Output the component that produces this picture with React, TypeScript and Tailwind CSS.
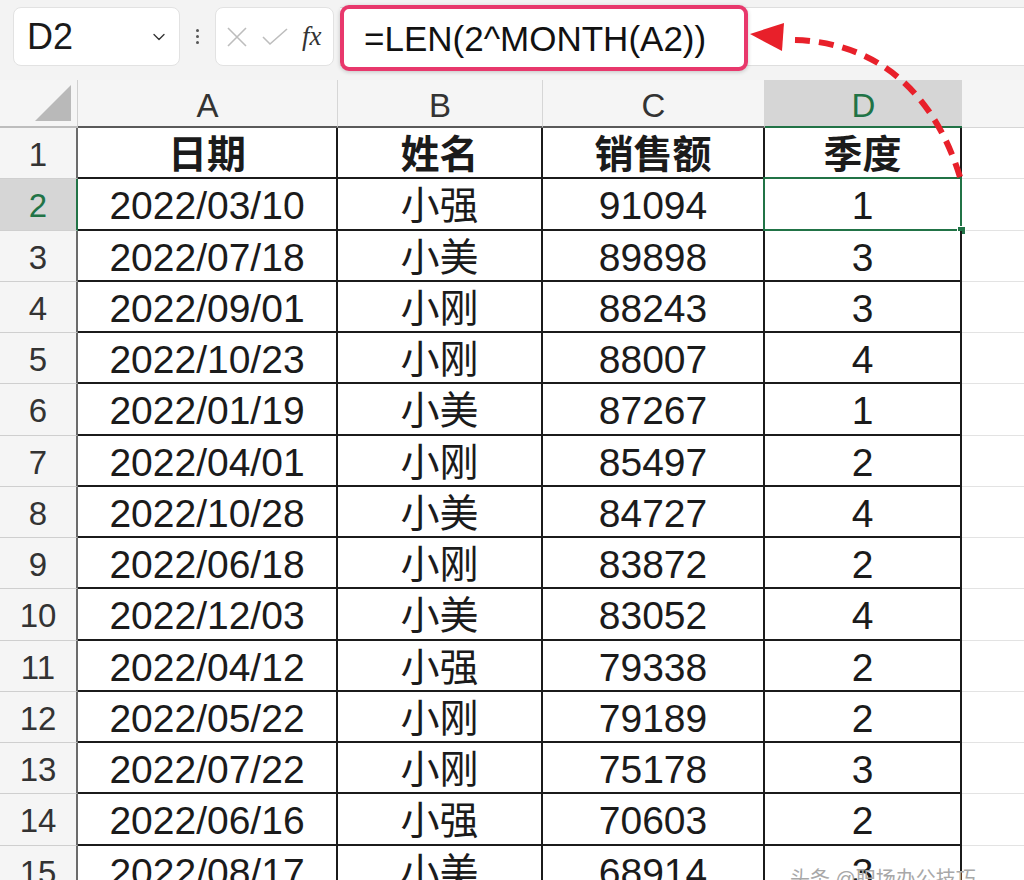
import * as React from "react";
import { ChevronDown } from "lucide-react";

const rows: [string, string, string, string][] = [
  ["2022/03/10", "小强", "91094", "1"],
  ["2022/07/18", "小美", "89898", "3"],
  ["2022/09/01", "小刚", "88243", "3"],
  ["2022/10/23", "小刚", "88007", "4"],
  ["2022/01/19", "小美", "87267", "1"],
  ["2022/04/01", "小刚", "85497", "2"],
  ["2022/10/28", "小美", "84727", "4"],
  ["2022/06/18", "小刚", "83872", "2"],
  ["2022/12/03", "小美", "83052", "4"],
  ["2022/04/12", "小强", "79338", "2"],
  ["2022/05/22", "小刚", "79189", "2"],
  ["2022/07/22", "小刚", "75178", "3"],
  ["2022/06/16", "小强", "70603", "2"],
  ["2022/08/17", "小美", "68914", "3"],
];

const font = { fontFamily: '"Liberation Sans", "Noto Sans CJK SC", sans-serif' };

const FormulaBar: React.FC = () => (
  <div className="flex h-[80px] items-start bg-[#f3f3f3] pt-[7px]">
    <div className="ml-[13px] flex h-[59px] w-[167px] items-center justify-between rounded-lg border border-[#e2e2e2] bg-white pl-[13px] pr-[10px]">
      <span className="text-[36px] leading-none text-[#1a1a1a]">D2</span>
      <ChevronDown size={20} strokeWidth={1.6} className="text-[#333]" />
    </div>
    <div className="flex h-[59px] w-[35px] flex-col items-center justify-center gap-[3px]">
      <span className="h-[3px] w-[3px] rounded-full bg-[#555]" />
      <span className="h-[3px] w-[3px] rounded-full bg-[#555]" />
      <span className="h-[3px] w-[3px] rounded-full bg-[#555]" />
    </div>
    <div className="flex h-[59px] w-[119px] items-center gap-[14px] rounded-lg border border-[#e2e2e2] bg-white pl-[10px]">
      <svg width="22" height="22" viewBox="0 0 22 22" className="text-[#bdbdbd]">
        <path d="M2 2 L20 20 M20 2 L2 20" stroke="currentColor" strokeWidth="1.6" fill="none" />
      </svg>
      <svg width="26" height="20" viewBox="0 0 26 20" className="text-[#bdbdbd]">
        <path d="M1 10 L8 17 L25 2" stroke="currentColor" strokeWidth="1.6" fill="none" />
      </svg>
      <span className="text-[27px] italic leading-none text-[#333]" style={{ fontFamily: '"Liberation Serif", serif' }}>
        fx
      </span>
    </div>
    <div className="relative ml-[6px] h-[59px] flex-1 border-y border-[#dedede] bg-white">
      <div className="absolute left-0 top-[-3px] flex h-[66px] w-[408px] items-center rounded-[9px] border-[4px] border-[#e8386c] bg-white pl-[20px] shadow-[0_1px_4px_rgba(0,0,0,0.2)]">
        <span className="text-[35px] leading-none text-[#111]">=LEN(2^MONTH(A2))</span>
      </div>
    </div>
  </div>
);

const Sheet: React.FC = () => {
  const cell = "flex items-center justify-center border-r-2 border-b-2 border-[#1b1b1b] bg-white pt-[4px] text-[39px] leading-none text-[#1b1b1b]";
  const rowHead = "flex items-center justify-center border-r-2 border-b border-r-[#6b6b6b] border-b-[#cfcfcf] bg-[#f5f5f5] pt-[3px] text-[33px] leading-none text-[#333]";
  const colHead = "flex items-center justify-center border-r border-b-2 border-r-[#d6d6d6] border-b-[#5a5a5a] bg-[#f5f5f5] pt-[4px] text-[33px] leading-none text-[#333]";
  return (
    <div className="grid grid-cols-[78px_260px_205px_222px_197px_1fr] grid-rows-[48px] auto-rows-[51.25px]">
      <div className="relative border-r border-b-2 border-r-[#d0d0d0] border-b-[#bdbdbd] bg-[#f5f5f5]">
        <svg width="36" height="36" viewBox="0 0 36 36" className="absolute right-[6px] bottom-[5px]">
          <polygon points="0,36 36,36 36,0" fill="#b9b9b9" />
        </svg>
      </div>
      <div className={colHead}>A</div>
      <div className={colHead}>B</div>
      <div className={colHead}>C</div>
      <div className="flex items-center justify-center border-b-2 border-b-[#217346] bg-[#d6d6d6] pt-[4px] text-[33px] leading-none text-[#217346]">
        D
      </div>
      <div className="border-b border-[#d6d6d6] bg-[#f5f5f5]" />

      <div className={rowHead}>1</div>
      {["日期", "姓名", "销售额", "季度"].map((h) => (
        <div key={h} className={cell + " font-bold"}>
          {h}
        </div>
      ))}
      <div className="border-b border-[#e3e3e3] bg-white" />

      {rows.map((r, i) => {
        const sel = i === 0;
        return (
          <React.Fragment key={i}>
            <div
              className={
                sel
                  ? "flex items-center justify-center border-r-2 border-b border-r-[#217346] border-b-[#cfcfcf] bg-[#d6d6d6] pt-[3px] text-[33px] leading-none text-[#217346]"
                  : rowHead
              }
            >
              {i + 2}
            </div>
            <div className={cell}>{r[0]}</div>
            <div className={cell}>{r[1]}</div>
            <div className={cell}>{r[2]}</div>
            <div className={cell + " relative"}>
              {r[3]}
              {sel && (
                <>
                  <div className="absolute left-[-2px] top-[-2px] right-[-2px] bottom-[-2px] border-2 border-[#217346]" />
                  <div className="absolute right-[-6px] bottom-[-6px] h-[9px] w-[9px] border border-white bg-[#217346]" />
                </>
              )}
            </div>
            <div className="border-b border-[#e3e3e3] bg-white" />
          </React.Fragment>
        );
      })}
    </div>
  );
};

export default function App() {
  return (
    <div className="relative h-[880px] w-[1024px] overflow-hidden bg-white" style={font}>
      <FormulaBar />
      <Sheet />
      <svg className="pointer-events-none absolute left-0 top-0" width="1024" height="200" viewBox="0 0 1024 200">
        <path
          d="M795 40 C865 42, 930 80, 960 177"
          stroke="#e8202a"
          strokeWidth="6"
          strokeDasharray="15 9"
          fill="none"
        />
        <polygon points="750,34 784,23 782,51" fill="#e8202a" />
      </svg>
      <div className="absolute left-[790px] top-[864px] text-[20px] text-[#a8a8a8]">头条 @职场办公技巧</div>
    </div>
  );
}
